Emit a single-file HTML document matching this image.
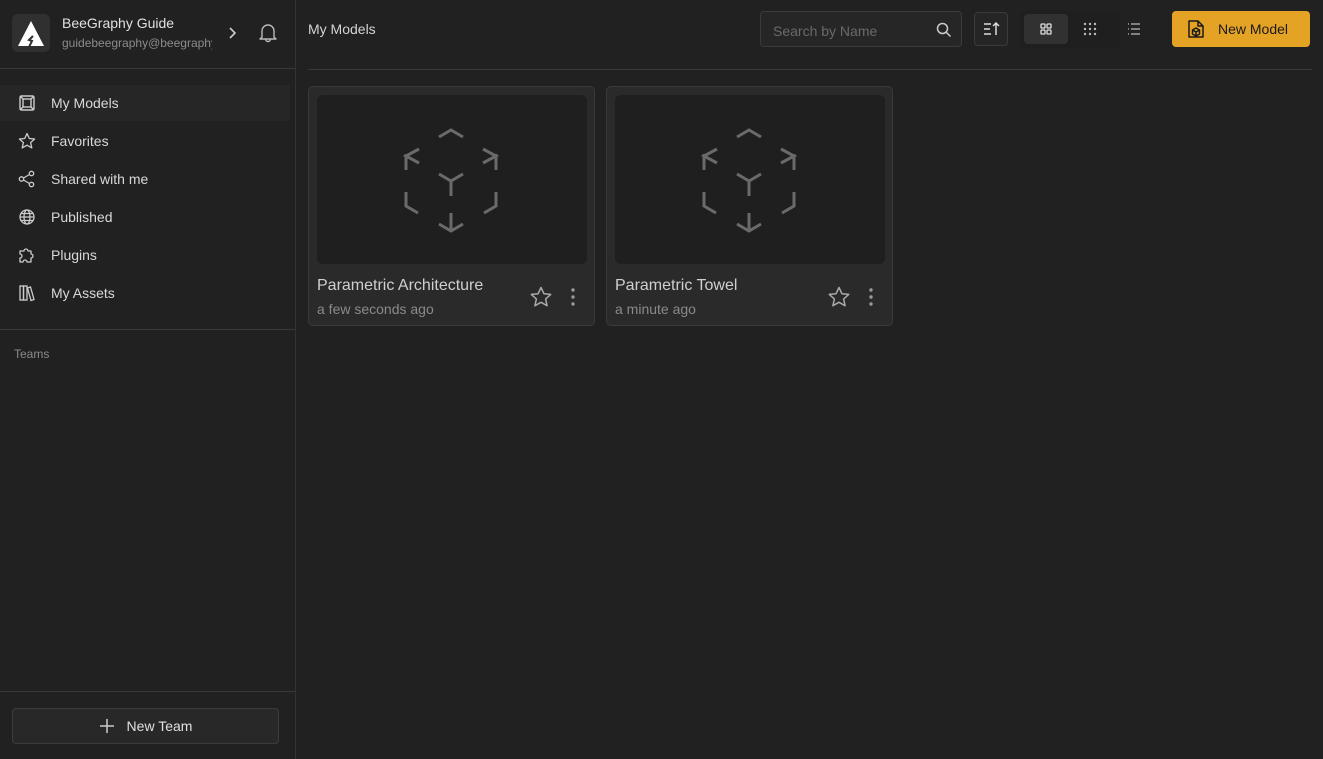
<!DOCTYPE html>
<html><head><meta charset="utf-8"><style>
*{box-sizing:border-box;margin:0;padding:0}
body{width:1323px;height:759px;background:#212121;font-family:"Liberation Sans",sans-serif;position:relative;overflow:hidden;color:#ddd}
.abs{position:absolute}
.side{left:0;top:0;width:296px;height:759px;background:#212121;border-right:1px solid #333}
.hline{height:1px;background:#393939}
.nav{left:0;width:290px;height:36px;font-size:14px;color:#d8d8d8;display:flex;align-items:center;padding-left:51px}
.nav svg{position:absolute;left:18px;top:9px}
.card{width:287px;height:240px;background:#2a2a2a;border:1px solid #3a3a3a;border-radius:5px}
.thumb{position:absolute;left:8px;top:8px;width:270px;height:169px;background:#1f1f1f;border-radius:6px}
.title{position:absolute;left:8px;top:190px;font-size:16px;color:#cfcfcf}
.sub{position:absolute;left:8px;top:214px;font-size:14px;color:#8a8a8a}
</style></head><body>
<div class="abs side"></div>
<!-- header -->
<div class="abs" style="left:12px;top:14px;width:38px;height:38px;background:#303030;border-radius:6px">
<svg width="38" height="38" viewBox="0 0 38 38"><path d="M19 7 L32 32 L6 32 Z" fill="#fff"/><path d="M21 22 L17 26 L20 27 L17 33" stroke="#303030" stroke-width="2" fill="none"/></svg></div>
<div class="abs" style="left:62px;top:15px;font-size:14px;color:#e0e0e0">BeeGraphy Guide</div>
<div class="abs" style="left:62px;top:36px;font-size:12px;color:#8c8c8c;width:150px;overflow:hidden;white-space:nowrap">guidebeegraphy@beegraphy.com</div>
<svg class="abs" style="left:226px;top:26px" width="12" height="14" viewBox="0 0 12 14"><path d="M4 2 L9 7 L4 12" stroke="#ccc" stroke-width="1.6" fill="none"/></svg>
<svg class="abs" style="left:257px;top:22px" width="22" height="22" viewBox="0 0 22 22"><path d="M5 15 L5 9 A6 6 0 0 1 17 9 L17 15 L19 17 L3 17 Z M8.5 17 A2.5 2.5 0 0 0 13.5 17" stroke="#bbb" stroke-width="1.4" fill="none" stroke-linejoin="round"/></svg>
<div class="abs hline" style="left:0;top:68px;width:295px"></div>
<!-- nav -->
<div class="abs nav" style="top:85px;background:#262626">My Models<svg width="18" height="18" viewBox="0 0 18 18" fill="none" stroke="#ccc" stroke-width="1.4"><rect x="2" y="2" width="14" height="14" rx="1.5"/><rect x="5" y="5" width="8" height="8"/><path d="M2 2L5 5M16 2L13 5M2 16L5 13M16 16L13 13"/></svg></div>
<div class="abs nav" style="top:123px">Favorites<svg width="18" height="18" viewBox="0 0 18 18" fill="none" stroke="#ccc" stroke-width="1.3" stroke-linejoin="round"><path d="M9 1.5l2.3 5 5.3.5-4 3.6 1.2 5.3L9 13.2 4.2 15.9l1.2-5.3-4-3.6 5.3-.5z"/></svg></div>
<div class="abs nav" style="top:161px">Shared with me<svg width="18" height="18" viewBox="0 0 18 18" fill="none" stroke="#ccc" stroke-width="1.3"><circle cx="3.5" cy="9" r="2.2"/><circle cx="13.5" cy="3.5" r="2.2"/><circle cx="13.5" cy="14.5" r="2.2"/><path d="M5.5 8L11.5 4.5M5.5 10L11.5 13.5"/></svg></div>
<div class="abs nav" style="top:199px">Published<svg width="18" height="18" viewBox="0 0 18 18" fill="none" stroke="#ccc" stroke-width="1.3"><circle cx="9" cy="9" r="7"/><ellipse cx="9" cy="9" rx="3" ry="7"/><path d="M2 9h14M3 5.5h12M3 12.5h12"/></svg></div>
<div class="abs nav" style="top:237px">Plugins<svg width="18" height="18" viewBox="0 0 18 18" fill="none" stroke="#ccc" stroke-width="1.3" stroke-linejoin="round"><path d="M2 5h4a2 2 0 1 1 4 0h3v3a2 2 0 1 1 0 4v4H9a2 2 0 1 0-4 0H2v-4a2 2 0 1 0 0-4z"/></svg></div>
<div class="abs nav" style="top:275px">My Assets<svg width="18" height="18" viewBox="0 0 18 18" fill="none" stroke="#ccc" stroke-width="1.3"><rect x="2" y="2" width="3.5" height="14"/><rect x="5.5" y="2" width="3.5" height="14"/><path d="M9.5 4l3-1 3.5 12.5-3 1z"/></svg></div>
<div class="abs hline" style="left:0;top:329px;width:295px"></div>
<div class="abs" style="left:14px;top:347px;font-size:12px;color:#8a8a8a">Teams</div>
<div class="abs hline" style="left:0;top:691px;width:295px"></div>
<div class="abs" style="left:12px;top:708px;width:267px;height:36px;background:#282828;border:1px solid #3c3c3c;border-radius:4px;display:flex;align-items:center;justify-content:center;font-size:14px;color:#e0e0e0">
<svg width="16" height="16" viewBox="0 0 16 16" style="margin-right:12px"><path d="M8 1v14M1 8h14" stroke="#ccc" stroke-width="1.5"/></svg>New Team</div>
<!-- topbar -->
<div class="abs" style="left:308px;top:21px;font-size:14px;color:#d4d4d4">My Models</div>
<div class="abs" style="left:760px;top:11px;width:202px;height:36px;background:#262626;border:1px solid #3a3a3a;border-radius:4px;font-size:14px;color:#6a6a6a;padding:11px 0 0 12px">Search by Name
<svg class="abs" style="left:174px;top:9px" width="18" height="18" viewBox="0 0 18 18" fill="none" stroke="#ccc" stroke-width="1.5"><circle cx="7.5" cy="7.5" r="5"/><path d="M11 11l4.5 4.5"/></svg></div>
<div class="abs" style="left:974px;top:12px;width:34px;height:34px;border:1px solid #3a3a3a;border-radius:4px;background:#252525">
<svg width="32" height="32" viewBox="0 0 32 32" fill="none" stroke="#ddd" stroke-width="1.5"><path d="M9 11h7M9 16h6M9 21h7M21 22V10M18 13l3-3 3 3"/></svg></div>
<div class="abs" style="left:1020px;top:11px;width:100px;height:38px;background:#1f1f1f;border-radius:5px"></div>
<div class="abs" style="left:1024px;top:14px;width:44px;height:30px;background:#313131;border-radius:4px">
<svg width="44" height="30" viewBox="0 0 44 30" fill="none" stroke="#e0e0e0" stroke-width="1.3"><rect x="17" y="10" width="4" height="4" rx=".8"/><rect x="23" y="10" width="4" height="4" rx=".8"/><rect x="17" y="16" width="4" height="4" rx=".8"/><rect x="23" y="16" width="4" height="4" rx=".8"/></svg></div>
<svg class="abs" style="left:1082px;top:21px" width="16" height="16" viewBox="0 0 16 16" fill="#bbb"><circle cx="3" cy="3" r="1.2"/><circle cx="8" cy="3" r="1.2"/><circle cx="13" cy="3" r="1.2"/><circle cx="3" cy="8" r="1.2"/><circle cx="8" cy="8" r="1.2"/><circle cx="13" cy="8" r="1.2"/><circle cx="3" cy="13" r="1.2"/><circle cx="8" cy="13" r="1.2"/><circle cx="13" cy="13" r="1.2"/></svg>
<svg class="abs" style="left:1126px;top:21px" width="16" height="16" viewBox="0 0 16 16" stroke="#bbb" stroke-width="1.3"><path d="M2 3h1M2 8h1M2 13h1M5 3h9M5 8h9M5 13h9"/></svg>
<div class="abs" style="left:1172px;top:11px;width:138px;height:36px;background:#e5a326;border-radius:4px;font-size:14px;color:#1a1a1a;padding:10px 0 0 46px">New Model
<svg class="abs" style="left:15px;top:8px" width="18" height="20" viewBox="0 0 18 20" fill="none" stroke="#1a1a1a" stroke-width="1.5" stroke-linejoin="round"><path d="M2 2h9l5 5v11H2z M11 2v5h5"/><path d="M9 9l3.5 2v4L9 17l-3.5-2v-4z M5.5 11L9 13l3.5-2M9 13v4"/></svg></div>
<div class="abs hline" style="left:308px;top:69px;width:1004px"></div>
<!-- cards -->
<div class="abs card" style="left:308px;top:86px">
<div class="thumb"><svg width="270" height="169" viewBox="318 95 270 169" fill="none" stroke="#6a6a6a" stroke-width="3" stroke-linecap="butt">
<path d="M440 137L452 130L464 137"/><path d="M420 149L407 156L420 163M407 154V170"/><path d="M484 149L497 156L484 163M497 154V170"/>
<path d="M440 174L452 181L464 174M452 181V196"/><path d="M407 192V206L419 213"/><path d="M497 192V206L485 213"/>
<path d="M452 213V230M440 224L452 231L464 224"/></svg></div>
<div class="title">Parametric Architecture</div><div class="sub">a few seconds ago</div>
<svg class="abs" style="left:220px;top:198px" width="24" height="24" viewBox="0 0 24 24" fill="none" stroke="#aaa" stroke-width="1.5" stroke-linejoin="round"><path d="M12 2.5l2.9 6.2 6.8.7-5.1 4.6 1.5 6.7L12 17.3l-6.1 3.4 1.5-6.7-5.1-4.6 6.8-.7z"/></svg>
<svg class="abs" style="left:258px;top:199px" width="12" height="22" viewBox="0 0 12 22" fill="#999"><circle cx="6" cy="4" r="1.7"/><circle cx="6" cy="11" r="1.7"/><circle cx="6" cy="18" r="1.7"/></svg>
</div>
<div class="abs card" style="left:606px;top:86px">
<div class="thumb"><svg width="270" height="169" viewBox="318 95 270 169" fill="none" stroke="#6a6a6a" stroke-width="3">
<path d="M440 137L452 130L464 137"/><path d="M420 149L407 156L420 163M407 154V170"/><path d="M484 149L497 156L484 163M497 154V170"/>
<path d="M440 174L452 181L464 174M452 181V196"/><path d="M407 192V206L419 213"/><path d="M497 192V206L485 213"/>
<path d="M452 213V230M440 224L452 231L464 224"/></svg></div>
<div class="title">Parametric Towel</div><div class="sub">a minute ago</div>
<svg class="abs" style="left:220px;top:198px" width="24" height="24" viewBox="0 0 24 24" fill="none" stroke="#aaa" stroke-width="1.5" stroke-linejoin="round"><path d="M12 2.5l2.9 6.2 6.8.7-5.1 4.6 1.5 6.7L12 17.3l-6.1 3.4 1.5-6.7-5.1-4.6 6.8-.7z"/></svg>
<svg class="abs" style="left:258px;top:199px" width="12" height="22" viewBox="0 0 12 22" fill="#999"><circle cx="6" cy="4" r="1.7"/><circle cx="6" cy="11" r="1.7"/><circle cx="6" cy="18" r="1.7"/></svg>
</div>
</body></html>
